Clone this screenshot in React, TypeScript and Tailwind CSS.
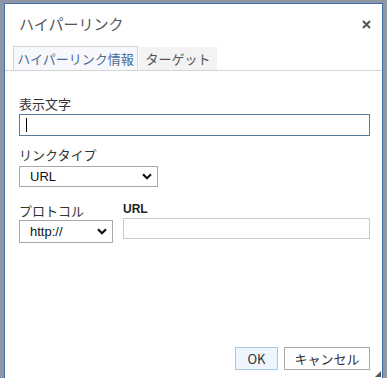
import React from "react";

const font = { fontFamily: '"Noto Sans CJK JP", "Liberation Sans", sans-serif' };

function Chevron() {
  return (
    <svg width="10" height="7" viewBox="0 0 10 7" className="shrink-0">
      <path d="M1 1.2 L5 5.2 L9 1.2" fill="none" stroke="#111" strokeWidth="2.2" />
    </svg>
  );
}

function Select({ value, width, height }: { value: string; width: string; height: string }) {
  return (
    <div
      className={`flex items-center justify-between border border-[#a9a9a9] bg-white pl-[10px] pr-[5px] text-[13px] text-[#111] ${width} ${height}`}
      style={{ fontFamily: '"Liberation Sans", Arial, sans-serif' }}
    >
      <span>{value}</span>
      <Chevron />
    </div>
  );
}

export default function App() {
  return (
    <div className="h-[378px] w-[387px] overflow-hidden bg-[#8e96a4] pl-[4px] pt-[3px]" style={font}>
      <div className="relative flex h-[376px] w-[379px] flex-col border border-[#3f6fa8] bg-white">
        <div className="flex h-[38px] items-center justify-between pl-[14px] pr-[11px] pt-[2px]">
          <span className="text-[15px] text-[#555]">ハイパーリンク</span>
          <svg width="9" height="9" viewBox="0 0 9 9">
            <path d="M1 1 L8 8 M8 1 L1 8" stroke="#555" strokeWidth="2" />
          </svg>
        </div>
        <div className="mt-[5px] flex h-[24px] items-end border-b border-[#d4d4d4] pl-[8px]">
          <div className="flex h-[24px] w-[125px] items-center justify-center border border-b-0 border-[#d4d4d4] bg-[#f6f8fb] text-[13px] text-[#4a6a98]">
            ハイパーリンク情報
          </div>
          <div className="ml-[1px] flex h-[23px] w-[78px] items-center justify-center bg-[#f3f3f3] text-[13px] text-[#555]">
            ターゲット
          </div>
        </div>
        <div className="flex flex-col pl-[14px] pr-[12px]">
          <label className="mt-[24px] text-[13px] leading-[18px] text-[#333]">表示文字</label>
          <div className="mt-[1px] flex h-[22px] w-[351px] items-center border border-[#587a9e] pl-[6px]">
            <div className="h-[14px] w-px bg-black" />
          </div>
          <label className="mt-[10px] text-[13px] leading-[18px] text-[#333]">リンクタイプ</label>
          <div className="mt-[2px]">
            <Select value="URL" width="w-[139px]" height="h-[21px]" />
          </div>
          <div className="mt-[14px] flex gap-[10px]">
            <div className="flex flex-col">
              <label className="mt-[1px] text-[13px] leading-[18px] text-[#333]">プロトコル</label>
              <div className="mt-[0px]">
                <Select value="http://" width="w-[94px]" height="h-[23px]" />
              </div>
            </div>
            <div className="flex flex-1 flex-col">
              <label
                className="text-[12px] font-bold leading-[16px] text-[#222]"
                style={{ fontFamily: '"Liberation Sans", Arial, sans-serif' }}
              >
                URL
              </label>
              <div className="mt-[1px] h-[21px] w-[247px] border border-[#c8c8c8]" />
            </div>
          </div>
        </div>
        <div className="mt-auto mb-[8px] flex justify-end gap-[6px] pr-[12px]">
          <button className="h-[23px] w-[43px] border border-[#a8c8e8] bg-[#eef5fc] text-[13px] text-[#333]">
            OK
          </button>
          <button className="h-[23px] w-[86px] border border-[#a9a9a9] bg-white text-[13px] text-[#333]">
            キャンセル
          </button>
        </div>
        <svg className="absolute bottom-[1px] right-[1px]" width="6" height="6" viewBox="0 0 6 6">
          <path d="M6 0 L6 6 L0 6 Z" fill="#555" />
        </svg>
      </div>
    </div>
  );
}
